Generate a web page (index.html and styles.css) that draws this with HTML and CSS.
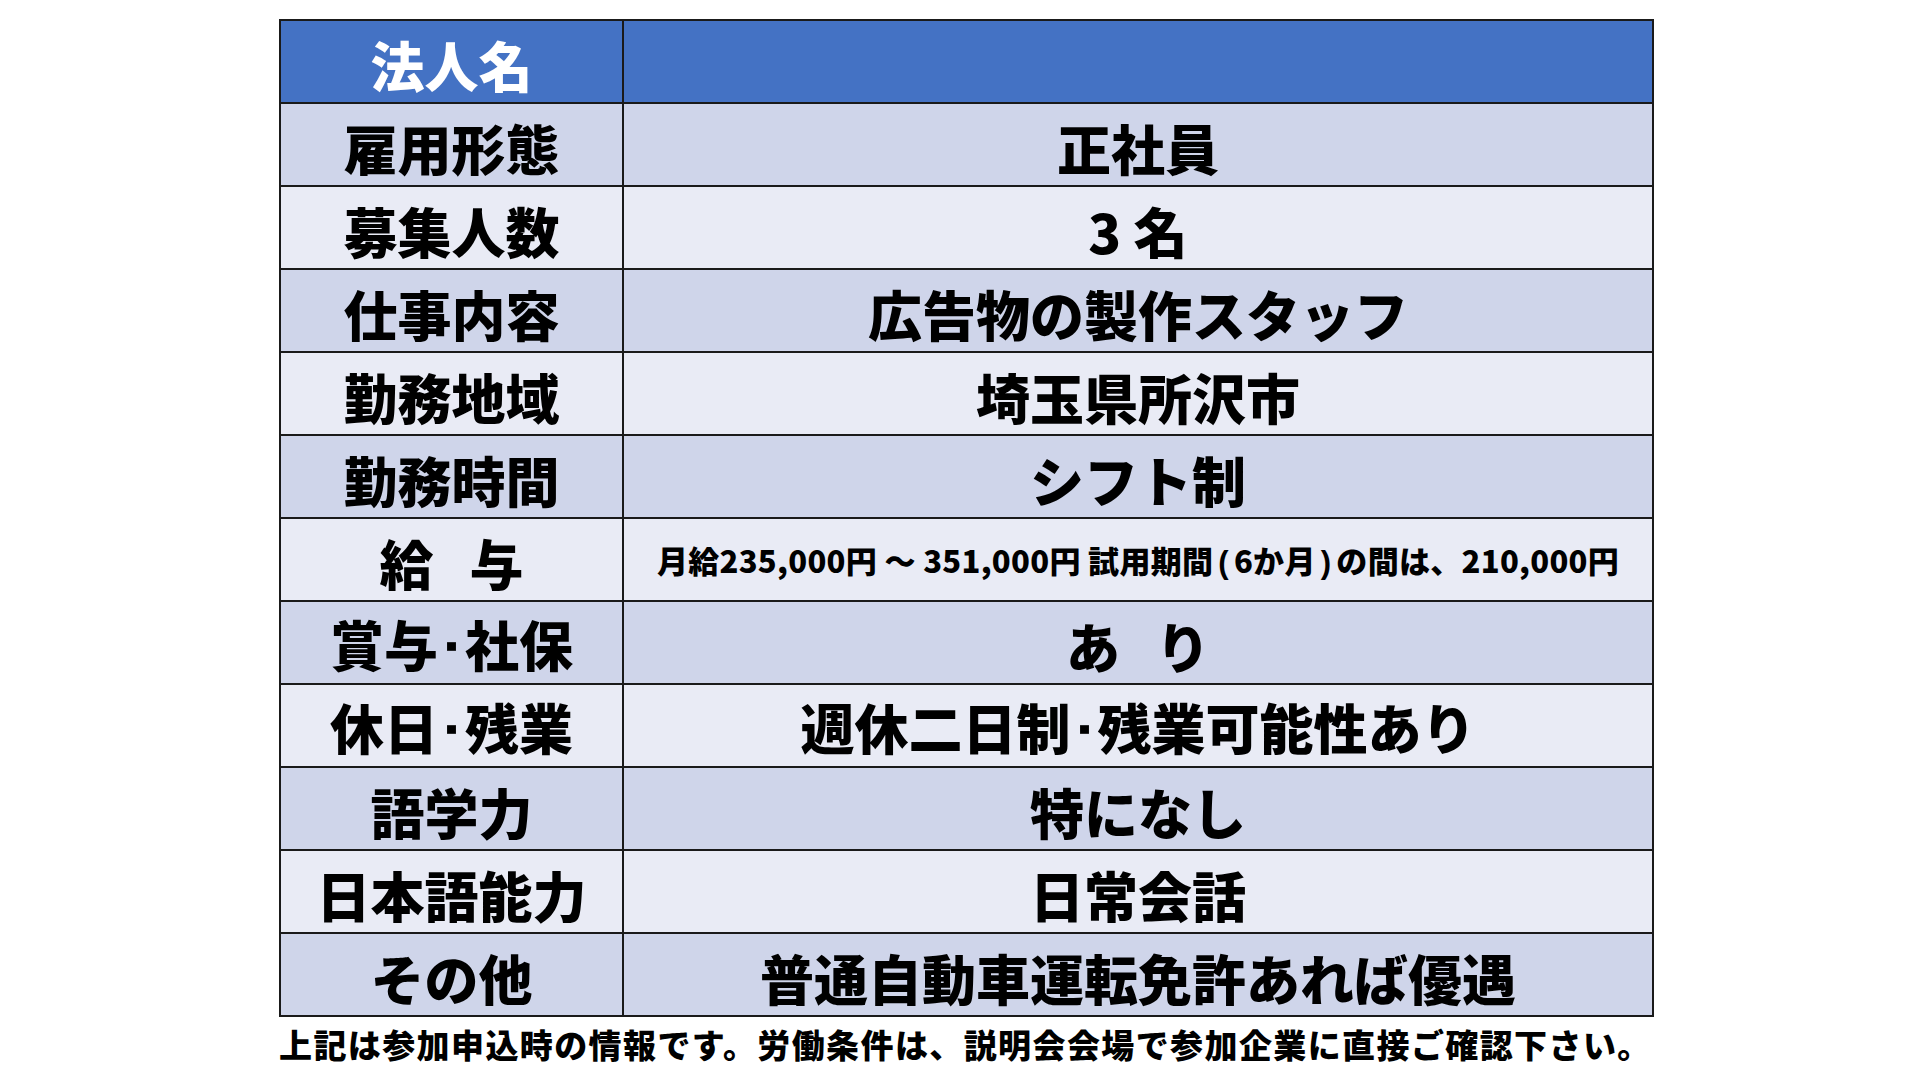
FILE: index.html
```html
<!DOCTYPE html>
<html lang="ja">
<head>
<meta charset="utf-8">
<link rel="stylesheet" href="styles.css">
</head>
<body>
<div class="page">
  <table class="job">
    <tr class="head"><th>法人名</th><td></td></tr>
    <tr class="dark"><th>雇用形態</th><td>正社員</td></tr>
    <tr class="light"><th>募集人数</th><td>3 名</td></tr>
    <tr class="dark"><th>仕事内容</th><td>広告物の製作スタッフ</td></tr>
    <tr class="light"><th>勤務地域</th><td>埼玉県所沢市</td></tr>
    <tr class="dark"><th>勤務時間</th><td>シフト制</td></tr>
    <tr class="light"><th>給<span class="gap"> </span>与</th><td class="small">月給235,000円 ～ 351,000円 試用期間<span class="paren">(</span>6か月<span class="paren">)</span>の間は、210,000円</td></tr>
    <tr class="dark"><th>賞与<span class="dot">･</span>社保</th><td>あ<span class="gap"> </span>り</td></tr>
    <tr class="light"><th>休日<span class="dot">･</span>残業</th><td>週休二日制<span class="dot">･</span>残業可能性あり</td></tr>
    <tr class="dark"><th>語学力</th><td>特になし</td></tr>
    <tr class="light"><th>日本語能力</th><td>日常会話</td></tr>
    <tr class="dark"><th>その他</th><td>普通自動車運転免許あれば優遇</td></tr>
  </table>
  <p class="note">上記は参加申込時の情報です。労働条件は、説明会会場で参加企業に直接ご確認下さい。</p>
</div>
</body>
</html>
```

FILE: styles.css
```css
html, body {
  margin: 0;
  padding: 0;
  background: #ffffff;
}
body {
  width: 1920px;
  height: 1080px;
  overflow: hidden;
  font-family: "Noto Sans CJK JP", "Noto Sans", sans-serif;
  font-weight: 900;
  color: #000000;
}
.page {
  padding: 19px 0 0 279px;
}
.job {
  border-collapse: collapse;
  width: 1375px;
  table-layout: fixed;
}
.job th, .job td {
  border: 2px solid #1a1a1a;
  height: 75px;
  padding: 6px 0 0 0;
  text-align: center;
  vertical-align: middle;
  font-size: 54px;
  line-height: 1;
  font-weight: 900;
  white-space: nowrap;
}
.job th {
  width: 341px;
}
.head th, .head td {
  background: #4472c4;
  color: #ffffff;
}
.dark th, .dark td {
  background: #cfd5ea;
}
.light th, .light td {
  background: #e9ebf5;
}
.gap {
  display: inline-block;
  width: 36px;
}
.dot {
  font-family: "Liberation Sans", sans-serif;
  font-weight: 700;
}
.job td.small {
  font-size: 31px;
  padding-top: 2px;
  letter-spacing: 0.3px;
}
.paren {
  font-family: "Liberation Sans", sans-serif;
  font-weight: 700;
  margin: 0 5px;
}
.note {
  margin: 8px 0 0 0;
  font-size: 33px;
  line-height: 1.2;
  letter-spacing: 1.4px;
  white-space: nowrap;
}
```
